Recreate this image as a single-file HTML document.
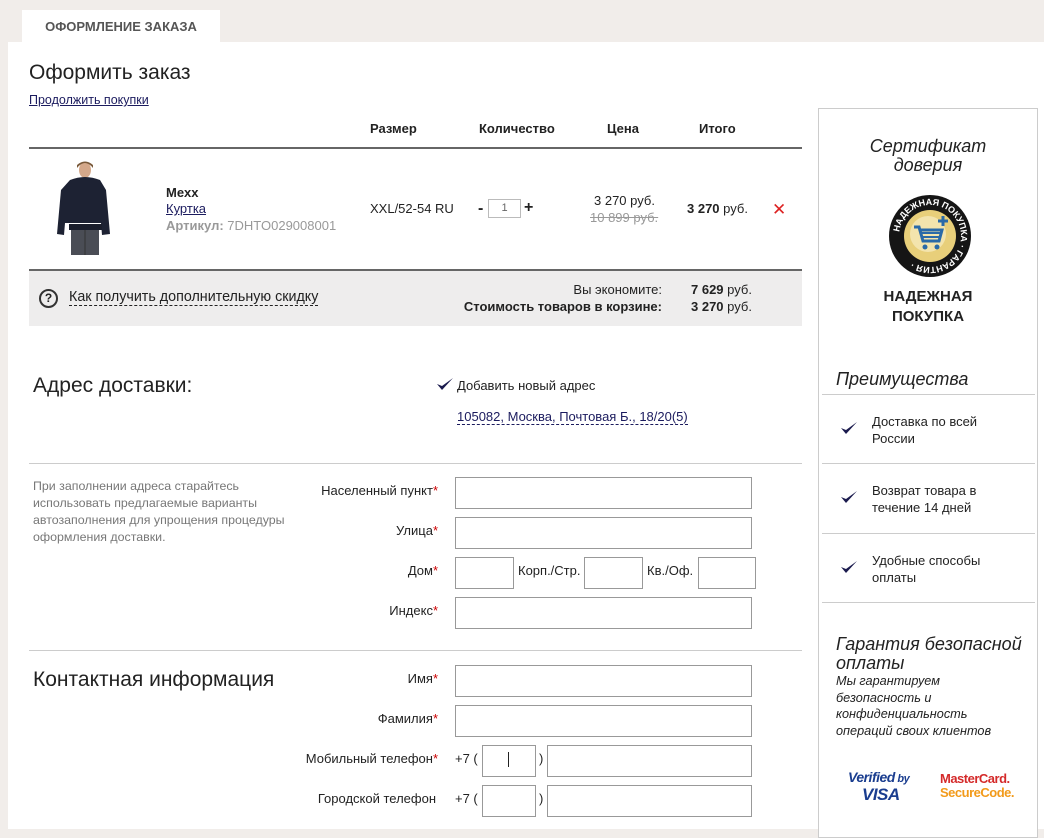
<!DOCTYPE html>
<html><head><meta charset="utf-8"><style>
*{margin:0;padding:0;box-sizing:border-box}
body{width:1044px;height:829px;background:#f1edea;font-family:"Liberation Sans",Arial,sans-serif;font-size:13px;color:#222;position:relative;overflow:hidden}
.a{position:absolute;white-space:nowrap}
.main{position:absolute;left:8px;top:42px;width:1036px;height:787px;background:#fff}
.tab{position:absolute;left:22px;top:10px;width:198px;height:33px;background:#fff;text-align:center;font-weight:bold;font-size:13px;color:#555;line-height:33px}
.lnk{color:#1b1b5e;text-decoration:underline}
.dash{color:#1b1b5e;border-bottom:1px dashed #1b1b5e}
.hd{font-weight:bold;font-size:13px}
.inp{position:absolute;border:1px solid #999;background:#fff;height:32px}
.lbl{position:absolute;text-align:right;width:200px;font-size:13px}
.lbl b{color:#c00;font-weight:normal}
.hr{position:absolute;left:29px;width:773px;height:1px;background:#ccc}
.side{position:absolute;left:818px;top:108px;width:220px;height:730px;border:1px solid #ccc;background:#fff}
.it{font-style:italic;font-size:18px;color:#222}
.sl{position:absolute;left:822px;width:213px;height:1px;background:#ccc}
</style></head><body>
<div class="main"></div>
<div class="tab">ОФОРМЛЕНИЕ ЗАКАЗА</div>
<div class="a" style="left:29px;top:61px;font-size:21px">Оформить заказ</div>
<div class="a lnk" style="left:29px;top:93px;font-size:12.5px">Продолжить покупки</div>

<div class="a hd" style="left:370px;top:121px">Размер</div>
<div class="a hd" style="left:479px;top:121px">Количество</div>
<div class="a hd" style="left:607px;top:121px">Цена</div>
<div class="a hd" style="left:699px;top:121px">Итого</div>
<div class="a" style="left:29px;top:147px;width:773px;height:2px;background:#666"></div>

<svg class="a" style="left:50px;top:158px" width="66" height="98" viewBox="0 0 66 98">
<ellipse cx="35" cy="12" rx="6" ry="8" fill="#d4a88a"/>
<path d="M27 10 q8 -10 16 0 l0 -3 q-8 -7 -16 0z" fill="#7a5a3a"/>
<path d="M20 22 q15 -6 30 0 l6 10 l4 44 l-8 1 l-1 -12 l-36 0 l-1 12 l-7 -1 l4 -44z" fill="#1d2233"/>
<rect x="19" y="66" width="33" height="6" fill="#1a1e2c"/>
<rect x="21" y="72" width="28" height="25" fill="#4a4d55"/>
<line x1="35" y1="72" x2="35" y2="97" stroke="#333" stroke-width="1"/>
</svg>
<div class="a" style="left:166px;top:185px;font-weight:bold;font-size:13px">Mexx</div>
<div class="a lnk" style="left:166px;top:201px">Куртка</div>
<div class="a" style="left:166px;top:218px;color:#999"><b>Артикул:</b> 7DHTO029008001</div>
<div class="a" style="left:370px;top:201px">XXL/52-54 RU</div>
<div class="a" style="left:478px;top:200px;font-weight:bold;font-size:16px">-</div>
<div class="a" style="left:488px;top:199px;width:33px;height:19px;border:1px solid #bbb;text-align:center;color:#666;font-size:11px;line-height:17px">1</div>
<div class="a" style="left:524px;top:199px;font-weight:bold;font-size:16px">+</div>
<div class="a" style="left:594px;top:193px">3 270 руб.</div>
<div class="a" style="left:590px;top:210px;color:#999;text-decoration:line-through">10 899 руб.</div>
<div class="a" style="left:687px;top:201px"><b>3 270</b> руб.</div>
<div class="a" style="left:772px;top:200px;color:#d22;font-size:17px">✕</div>
<div class="a" style="left:29px;top:269px;width:773px;height:2px;background:#666"></div>
<div class="a" style="left:29px;top:271px;width:773px;height:55px;background:#eeeded"></div>
<div class="a" style="left:39px;top:289px;width:19px;height:19px;border:2px solid #333;border-radius:50%;text-align:center;font-weight:bold;font-size:12px;line-height:15px">?</div>
<div class="a" style="left:69px;top:289px"><span style="color:#222;border-bottom:1px dashed #222;font-size:14.3px">Как получить дополнительную скидку</span></div>
<div class="a" style="left:432px;top:282px;width:230px;text-align:right">Вы экономите:</div>
<div class="a" style="left:432px;top:299px;width:230px;text-align:right;font-weight:bold">Стоимость товаров в корзине:</div>
<div class="a" style="left:691px;top:282px"><b>7 629</b> руб.</div>
<div class="a" style="left:691px;top:299px"><b>3 270</b> руб.</div>

<div class="a" style="left:33px;top:374px;font-size:21px">Адрес доставки:</div>
<svg class="a" style="left:436px;top:377px" width="18" height="15"><path d="M1 7 l5 6 l11 -12 l-11 8z" fill="#1b1b4e"/></svg>
<div class="a" style="left:457px;top:378px">Добавить новый адрес</div>
<div class="a" style="left:457px;top:409px"><span class="dash">105082, Москва, Почтовая Б., 18/20(5)</span></div>
<div class="hr" style="top:463px"></div>
<div class="a" style="left:33px;top:478px;color:#777;line-height:17px;white-space:normal;width:275px;font-size:12.4px">При заполнении адреса старайтесь использовать предлагаемые варианты автозаполнения для упрощения процедуры оформления доставки.</div>

<div class="lbl" style="left:238px;top:483px">Населенный пункт<b>*</b></div>
<div class="inp" style="left:455px;top:477px;width:297px"></div>
<div class="lbl" style="left:238px;top:523px">Улица<b>*</b></div>
<div class="inp" style="left:455px;top:517px;width:297px"></div>
<div class="lbl" style="left:238px;top:563px">Дом<b>*</b></div>
<div class="inp" style="left:455px;top:557px;width:59px"></div>
<div class="a" style="left:518px;top:563px">Корп./Стр.</div>
<div class="inp" style="left:584px;top:557px;width:59px"></div>
<div class="a" style="left:647px;top:563px">Кв./Оф.</div>
<div class="inp" style="left:698px;top:557px;width:58px"></div>
<div class="lbl" style="left:238px;top:603px">Индекс<b>*</b></div>
<div class="inp" style="left:455px;top:597px;width:297px"></div>
<div class="hr" style="top:650px"></div>

<div class="a" style="left:33px;top:668px;font-size:21px">Контактная информация</div>
<div class="lbl" style="left:238px;top:671px">Имя<b>*</b></div>
<div class="inp" style="left:455px;top:665px;width:297px"></div>
<div class="lbl" style="left:238px;top:711px">Фамилия<b>*</b></div>
<div class="inp" style="left:455px;top:705px;width:297px"></div>
<div class="lbl" style="left:238px;top:751px">Мобильный телефон<b>*</b></div>
<div class="a" style="left:455px;top:751px">+7 (</div>
<div class="inp" style="left:482px;top:745px;width:54px"></div>
<div class="a" style="left:508px;top:752px;width:1px;height:15px;background:#222"></div>
<div class="a" style="left:539px;top:751px">)</div>
<div class="inp" style="left:547px;top:745px;width:205px"></div>
<div class="lbl" style="left:236px;top:791px">Городской телефон</div>
<div class="a" style="left:455px;top:791px">+7 (</div>
<div class="inp" style="left:482px;top:785px;width:54px"></div>
<div class="a" style="left:539px;top:791px">)</div>
<div class="inp" style="left:547px;top:785px;width:205px"></div>

<div class="side"></div>
<div class="a it" style="left:818px;top:137px;width:220px;text-align:center;line-height:19px;white-space:normal">Сертификат<br>доверия</div>
<svg class="a" style="left:888px;top:194px" width="84" height="84" viewBox="0 0 84 84">
<defs><path id="c" d="M42 42 m-31 0 a31 31 0 1 1 62 0 a31 31 0 1 1 -62 0"/></defs>
<circle cx="42" cy="42" r="41" fill="#151515"/>
<circle cx="42" cy="42" r="26" fill="#e8cf7a"/>
<circle cx="40" cy="40" r="18" fill="#f3e4ad"/>
<path d="M26 33 h5 l4 14 h16 l3 -11 h-21" fill="none" stroke="#2a6aa8" stroke-width="3"/>
<path d="M33 39 h20 M34 43 h17" stroke="#2a6aa8" stroke-width="2"/>
<circle cx="37" cy="53" r="2.5" fill="#2a6aa8"/><circle cx="49" cy="53" r="2.5" fill="#2a6aa8"/>
<path d="M55 22 v10 M50 27 h10" stroke="#2a6aa8" stroke-width="3"/>
<text font-size="9" font-weight="bold" fill="#fff" font-family="Liberation Sans,sans-serif"><textPath href="#c" startOffset="2%">НАДЕЖНАЯ ПОКУПКА · ГАРАНТИЯ ·</textPath></text>
</svg>
<div class="a" style="left:818px;top:287px;width:220px;text-align:center;font-weight:bold;font-size:15px;line-height:20px">НАДЕЖНАЯ<br>ПОКУПКА</div>
<div class="a it" style="left:836px;top:369px">Преимущества</div>
<div class="sl" style="top:394px"></div>
<div class="sl" style="top:463px"></div>
<div class="sl" style="top:533px"></div>
<div class="sl" style="top:602px"></div>
<svg class="a" style="left:840px;top:421px" width="18" height="15"><path d="M1 7 l5 6 l11 -12 l-11 8z" fill="#1b1b4e"/></svg>
<svg class="a" style="left:840px;top:490px" width="18" height="15"><path d="M1 7 l5 6 l11 -12 l-11 8z" fill="#1b1b4e"/></svg>
<svg class="a" style="left:840px;top:560px" width="18" height="15"><path d="M1 7 l5 6 l11 -12 l-11 8z" fill="#1b1b4e"/></svg>
<div class="a" style="left:872px;top:413px;line-height:17px">Доставка по всей<br>России</div>
<div class="a" style="left:872px;top:482px;line-height:17px">Возврат товара в<br>течение 14 дней</div>
<div class="a" style="left:872px;top:552px;line-height:17px">Удобные способы<br>оплаты</div>
<div class="a it" style="left:836px;top:635px;line-height:19px">Гарантия безопасной<br>оплаты</div>
<div class="a" style="left:836px;top:673px;font-style:italic;line-height:16.7px;font-size:12.7px">Мы гарантируем<br>безопасность и<br>конфиденциальность<br>операций своих клиентов</div>
<div class="a" style="left:848px;top:770px;color:#1a3d8f;font-weight:bold;font-style:italic;font-size:14px;line-height:15px;letter-spacing:-0.5px">Verified<span style="font-size:11px"> by</span><br><span style="font-size:17px;padding-left:14px">VISA</span></div>
<div class="a" style="left:940px;top:772px;font-weight:bold;font-size:13px;line-height:14px;letter-spacing:-0.5px"><span style="color:#d42a2a">MasterCard.</span><br><span style="color:#f29a1a">SecureCode.</span></div>
</body></html>
